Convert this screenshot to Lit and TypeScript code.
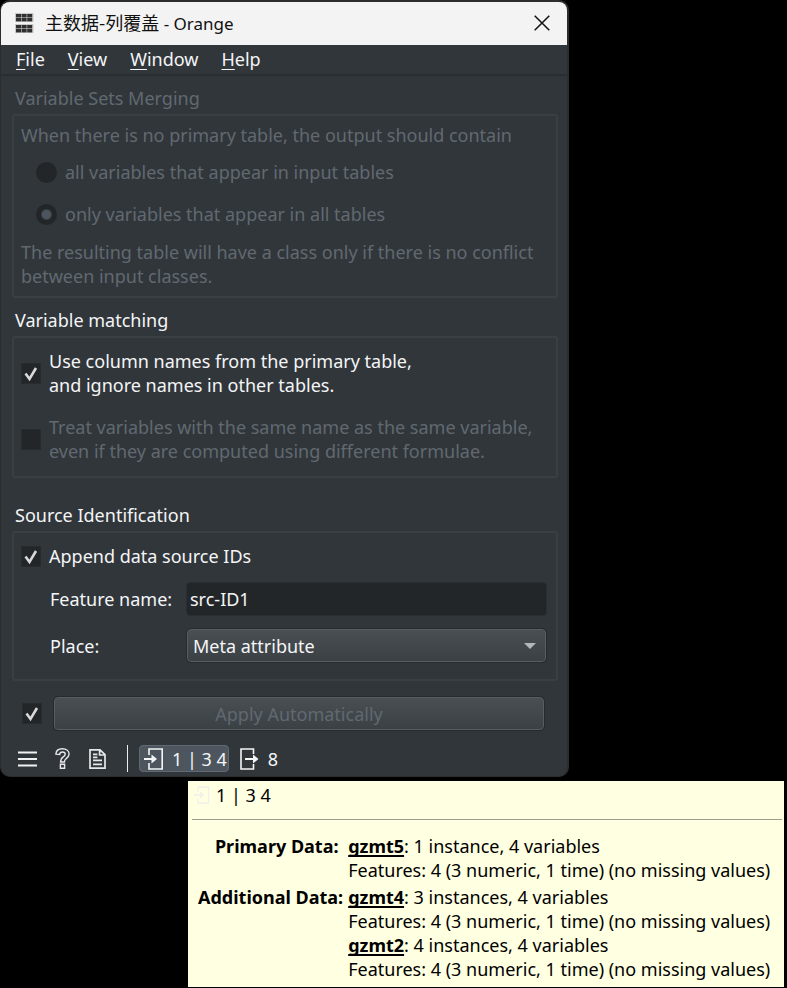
import { LitElement, html, css, svg } from "lit";
import { customElement, state } from "lit/decorators.js";

const BRACKET_IN = "M5 7V1H18.2V21H5V15";
const BRACKET_OUT = "M13.5 6V1H1V21H13.5V16";

const inputIcon = (cls: string) => html`
  <svg class=${cls} viewBox="0 0 20 22" width="20" height="22" aria-hidden="true">
    <path d=${BRACKET_IN} fill="none" stroke="currentColor" stroke-width="1.6" />
    <path d="M0 11H9" stroke="currentColor" stroke-width="2" />
    <path d="M7.5 6.5L13 11L7.5 15.5Z" fill="currentColor" />
  </svg>`;

const outputIcon = html`
  <svg viewBox="0 0 20 22" width="20" height="22" aria-hidden="true">
    <path d=${BRACKET_OUT} fill="none" stroke="currentColor" stroke-width="1.6" />
    <path d="M5 11H14" stroke="currentColor" stroke-width="2" />
    <path d="M13 6.5L18.5 11L13 15.5Z" fill="currentColor" />
  </svg>`;

const cells = [0, 4, 11, 15].map((y) =>
  [0, 1, 2].map((c) => svg`<rect x=${1 + c * 5.6} y=${y + 1} width="5" height="3.4" fill="#303030" />`)
);

const FEATURES = "Features: 4 (3 numeric, 1 time) (no missing values)";
const SOURCES = [
  { label: "Primary Data:\u00a0", tables: [{ name: "gzmt5", text: "1 instance, 4 variables" }] },
  {
    label: "Additional Data:",
    tables: [
      { name: "gzmt4", text: "3 instances, 4 variables" },
      { name: "gzmt2", text: "4 instances, 4 variables" },
    ],
  },
];

@customElement("app-root")
export class AppRoot extends LitElement {
  @state() private featureName = "src-ID1";

  static styles = css`
    :host {
      display: block;
      min-height: 100vh;
      background: #000;
      color: #f4f5f6;
      font: 18px/24px "Noto Sans", "Noto Sans CJK SC", sans-serif;
    }
    * { box-sizing: border-box; }
    button, input, select { font: inherit; color: inherit; margin: 0; }
    svg { display: block; flex: none; }
    .window {
      margin-right: 218px;
      background: #31363b;
      border: 1px solid #2d2d2d;
      border-top-width: 2px;
      border-right-width: 2px;
      border-radius: 10px;
      overflow: hidden;
    }
    .titlebar {
      display: flex;
      align-items: center;
      height: 43px;
      padding: 0 13px 2px 14px;
      gap: 11px;
      background: #f3f3f3;
      color: #111;
    }
    .title { flex: 1; margin: 0; font-size: 17px; font-weight: 400; }
    .cjk { font-family: "Noto Sans CJK SC", sans-serif; font-size: 18px; }
    .close { display: grid; place-items: center; width: 24px; height: 24px; padding: 0; border: 0; background: none; }
    .menubar {
      display: flex;
      gap: 2px;
      height: 31px;
      padding: 0 5px;
      border-bottom: 2px solid #2a2e32;
    }
    .menu { padding: 0 11px 0 10px; border: 0; background: none; line-height: 29px; }
    .menu u { text-decoration-thickness: 1px; text-underline-offset: 3px; }
    .content { padding: 10px 9px 0 11px; }
    .group { margin: 0 0 10px; padding: 0; border: 0; min-width: 0; }
    .group.matching { margin-bottom: 25px; }
    .group.source { margin-bottom: 15px; }
    .legend { padding: 0 3px; margin-bottom: 4px; }
    .box { border: 2px solid #3a3f44; border-radius: 3px; }
    .off { color: #616970; }
    .merge { padding: 7px; height: 184px; }
    .radios { display: grid; gap: 18px; padding: 13px 0 14px 15px; }
    .match { padding: 11px 7px 0; display: grid; gap: 18px; align-content: start; height: 142px; }
    .ident { padding: 11px 7px 0; height: 150px; }
    .choice { display: flex; align-items: center; gap: 8px; }
    .choice input, .apply input {
      appearance: none;
      flex: none;
      width: 20px;
      height: 21px;
      background: #232629 center / 21px no-repeat;
      border: 1px solid #272b2e;
    }
    .choice input[type="radio"] { width: 21px; border-radius: 50%; border: 0; }
    .choice input[type="radio"]:checked { background-image: radial-gradient(circle, #4c555d 4px, #232629 6px); }
    input[type="checkbox"]:checked {
      background-image: url("data:image/svg+xml,%3Csvg xmlns='http://www.w3.org/2000/svg' viewBox='0 0 21 21'%3E%3Cpath d='M5 10.5L9 16L15.5 5' fill='none' stroke='%23d6d8da' stroke-width='2.6'/%3E%3C/svg%3E");
    }
    .form {
      display: grid;
      grid-template-columns: 126px 1fr;
      gap: 13px 10px;
      align-items: center;
      padding: 14px 2px 0 29px;
    }
    .field {
      width: 100%;
      min-width: 0;
      height: 34px;
      padding: 0 3px;
      border: 1px solid #2a2e32;
      border-radius: 4px;
      background: #232629;
      outline: 0;
    }
    .picker { display: grid; align-items: center; }
    .picker > * { grid-area: 1 / 1; }
    .picker svg { justify-self: end; margin-right: 11px; pointer-events: none; }
    .picker select, .apply button {
      appearance: none;
      width: 100%;
      min-width: 0;
      height: 33px;
      padding: 0 5px;
      border: 1px solid #585d61;
      border-radius: 4px;
      outline: 1px solid #272b2e;
      background: linear-gradient(#4a4f54, #3b4045);
    }
    .picker select { width: calc(100% - 2px); margin: 0 1px; }
    .apply { display: flex; align-items: center; gap: 12px; padding: 0 14px 0 10px; }
    .apply button { margin: 1px 0; color: #616970; }
    .status { display: flex; align-items: center; height: 27px; margin: 14px 0 4px; padding: 0 5px; }
    .tool { display: grid; place-items: center; width: 20px; height: 24px; margin-right: 15px; padding: 0; border: 0; background: none; }
    .rule { width: 1px; height: 27px; margin: 0 11px 0 5px; background: #eceded; }
    .io { display: flex; align-items: center; gap: 8px; height: 27px; padding: 0 1px 0 4px; border: 1px solid transparent; border-radius: 4px; background: none; line-height: 24px; white-space: pre; }
    .io.on { background: #4d565e; border-color: #616a72; margin-right: 6px; }
    .tip {
      margin: 4px 3px 0 188px;
      padding: 2px 2px 6px 4px;
      background: #ffffe1;
      color: #000;
    }
    .summary { display: flex; align-items: center; gap: 6px; height: 24px; }
    .faint { color: #f0f1e8; width: 16px; margin-left: 2px; }
    .divider { height: 1px; margin: 12px 0 14px; border: 0; background: #9d9d93; }
    .data { border-collapse: collapse; white-space: nowrap; margin-left: 6px; }
    .data th { padding: 0 5px 3px 0; text-align: right; vertical-align: top; font-weight: 700; }
    .data td { padding: 0 0 3px; }
    .data tr:last-child > * { padding-bottom: 0; }
    .name { font-weight: 700; text-decoration: underline; text-decoration-thickness: 2px; text-underline-offset: 2px; text-decoration-skip-ink: none; }
  `;

  private menu(label: string) {
    return html`<button class="menu"><u>${label[0]}</u>${label.slice(1)}</button>`;
  }

  render() {
    return html`
      <main class="window">
        <header class="titlebar">
          <svg viewBox="0 0 19 20" width="19" height="20" aria-hidden="true">
            <path d="M0 0H18.5V9H0ZM0 11H18.5V20H0Z" fill="#c9c9c9" />
            ${cells}
          </svg>
          <h1 class="title"><span class="cjk">主数据-列覆盖</span> - Orange</h1>
          <button class="close" aria-label="Close">
            <svg viewBox="0 0 16 16" width="16" height="16"><path d="M.7 .7L15.3 15.3M15.3 .7L.7 15.3" stroke="#111" stroke-width="1.5" /></svg>
          </button>
        </header>
        <nav class="menubar">${["File", "View", "Window", "Help"].map((m) => this.menu(m))}</nav>

        <div class="content">
          <section class="group off" aria-labelledby="merging">
            <div class="legend" id="merging">Variable Sets Merging</div>
            <div class="box merge">
              <div>When there is no primary table, the output should contain</div>
              <div class="radios">
                <label class="choice"><input type="radio" name="merge" disabled />all variables that appear in input tables</label>
                <label class="choice"><input type="radio" name="merge" checked disabled />only variables that appear in all tables</label>
              </div>
              <div>The resulting table will have a class only if there is no conflict<br />between input classes.</div>
            </div>
          </section>

          <section class="group matching" aria-labelledby="matching">
            <div class="legend" id="matching">Variable matching</div>
            <div class="box match">
              <label class="choice"><input type="checkbox" checked /><span>Use column names from the primary table,<br />and ignore names in other tables.</span></label>
              <label class="choice off"><input type="checkbox" disabled /><span>Treat variables with the same name as the same variable,<br />even if they are computed using different formulae.</span></label>
            </div>
          </section>

          <section class="group source" aria-labelledby="source">
            <div class="legend" id="source">Source Identification</div>
            <div class="box ident">
              <label class="choice"><input type="checkbox" checked />Append data source IDs</label>
              <div class="form">
                <label for="feature">Feature name:</label>
                <input class="field" id="feature" type="text" .value=${this.featureName}
                  @input=${(e: Event) => (this.featureName = (e.target as HTMLInputElement).value)} />
                <label for="place">Place:</label>
                <div class="picker">
                  <select id="place"><option>Meta attribute</option><option>Class attribute</option><option>Attribute</option></select>
                  <svg viewBox="0 0 12 6" width="12" height="6" aria-hidden="true"><path d="M0 0H12L6 6Z" fill="#b4b7b9" /></svg>
                </div>
              </div>
            </div>
          </section>

          <div class="apply">
            <input type="checkbox" checked aria-label="Apply automatically" />
            <button disabled>Apply Automatically</button>
          </div>

          <footer class="status">
            <button class="tool" aria-label="Menu">
              <svg viewBox="0 0 19 16" width="19" height="16"><path d="M0 1.5H19M0 8H19M0 14.5H19" stroke="#f0f1f1" stroke-width="2.2" /></svg>
            </button>
            <button class="tool" aria-label="Help">
              <svg viewBox="0 0 15 21" width="15" height="21" fill="none" stroke="#e6e7e8" stroke-width="1.4">
                <path d="M.9 6.2C1 2.7 3.8 .8 7.4 .8C11.4 .8 14.1 3 14.1 6.1C14.1 8.6 12.6 9.7 11 10.8C9.8 11.7 9.4 12.2 9.4 14H5.6C5.6 11 6.6 10 8.2 8.9C9.5 8 10.2 7.4 10.2 6.2C10.2 4.9 9.1 4 7.5 4C5.8 4 4.8 4.9 4.7 6.4Z" />
                <path d="M5.4 16.2H9.6V20.2H5.4Z" />
              </svg>
            </button>
            <button class="tool" aria-label="Report">
              <svg viewBox="0 0 17 20" width="17" height="20" fill="none" stroke="#e6e7e8" stroke-width="1.7">
                <path d="M1 .9H11L16 5.7V19.1H1ZM10.6 .9V6H16M4 5.3H8.4M4 8.3H8.4M4 11.3H13M4 15.3H13" />
              </svg>
            </button>
            <span class="rule"></span>
            <button class="io on">${inputIcon("")}<span>1 | 3 4</span></button>
            <button class="io">${outputIcon}<span>8</span></button>
          </footer>
        </div>
      </main>

      <aside class="tip" role="tooltip">
        <div class="summary">${inputIcon("faint")}<span>1 | 3 4</span></div>
        <hr class="divider" />
        <table class="data">
          ${SOURCES.map(
            (s) => html`<tr>
              <th scope="row">${s.label}</th>
              <td>${s.tables.map((t) => html`<div><span class="name">${t.name}</span>: ${t.text}</div><div>${FEATURES}</div>`)}</td>
            </tr>`
          )}
        </table>
      </aside>
    `;
  }
}
